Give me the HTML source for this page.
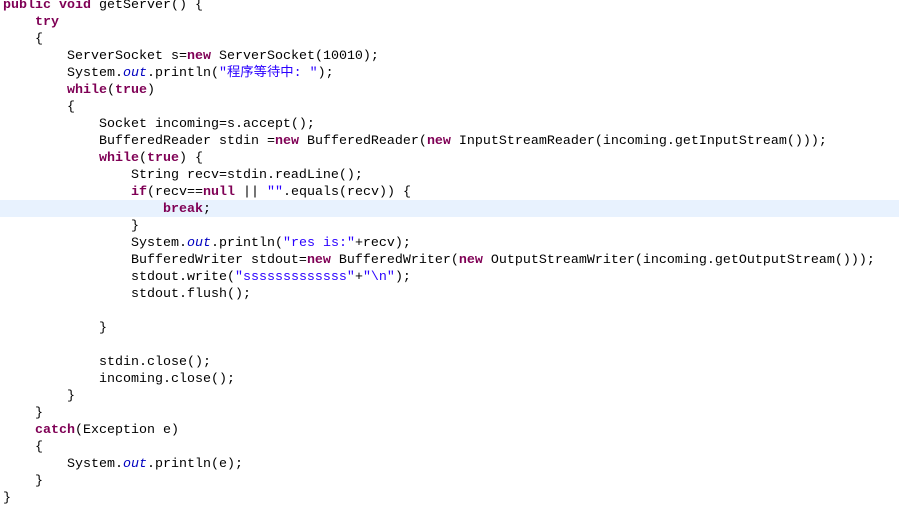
<!DOCTYPE html>
<html><head><meta charset="utf-8"><style>
html,body{margin:0;padding:0;background:#fff;width:899px;height:511px;overflow:hidden}
pre{margin:0;position:absolute;top:-3px;left:3px;font-family:"Liberation Mono","Noto Sans CJK SC",monospace;font-size:13.33px;line-height:17px;color:#000}
.k{color:#7f0055;font-weight:bold}
.s{color:#2a00ff}
.o{color:#0000c0;font-style:italic}
.hl{position:absolute;left:0;top:200px;width:899px;height:17px;background:#e8f2fe}
</style></head><body>
<div class="hl"></div>
<pre><span class="k">public</span> <span class="k">void</span> getServer() {
    <span class="k">try</span>
    {
        ServerSocket s=<span class="k">new</span> ServerSocket(10010);
        System.<span class="o">out</span>.println(<span class="s">"程序等待中: "</span>);
        <span class="k">while</span>(<span class="k">true</span>)
        {
            Socket incoming=s.accept();
            BufferedReader stdin =<span class="k">new</span> BufferedReader(<span class="k">new</span> InputStreamReader(incoming.getInputStream()));
            <span class="k">while</span>(<span class="k">true</span>) {
                String recv=stdin.readLine();
                <span class="k">if</span>(recv==<span class="k">null</span> || <span class="s">""</span>.equals(recv)) {
                    <span class="k">break</span>;
                }
                System.<span class="o">out</span>.println(<span class="s">"res is:"</span>+recv);
                BufferedWriter stdout=<span class="k">new</span> BufferedWriter(<span class="k">new</span> OutputStreamWriter(incoming.getOutputStream()));
                stdout.write(<span class="s">"sssssssssssss"</span>+<span class="s">"\n"</span>);
                stdout.flush();

            }

            stdin.close();
            incoming.close();
        }
    }
    <span class="k">catch</span>(Exception e)
    {
        System.<span class="o">out</span>.println(e);
    }
}</pre>
</body></html>
